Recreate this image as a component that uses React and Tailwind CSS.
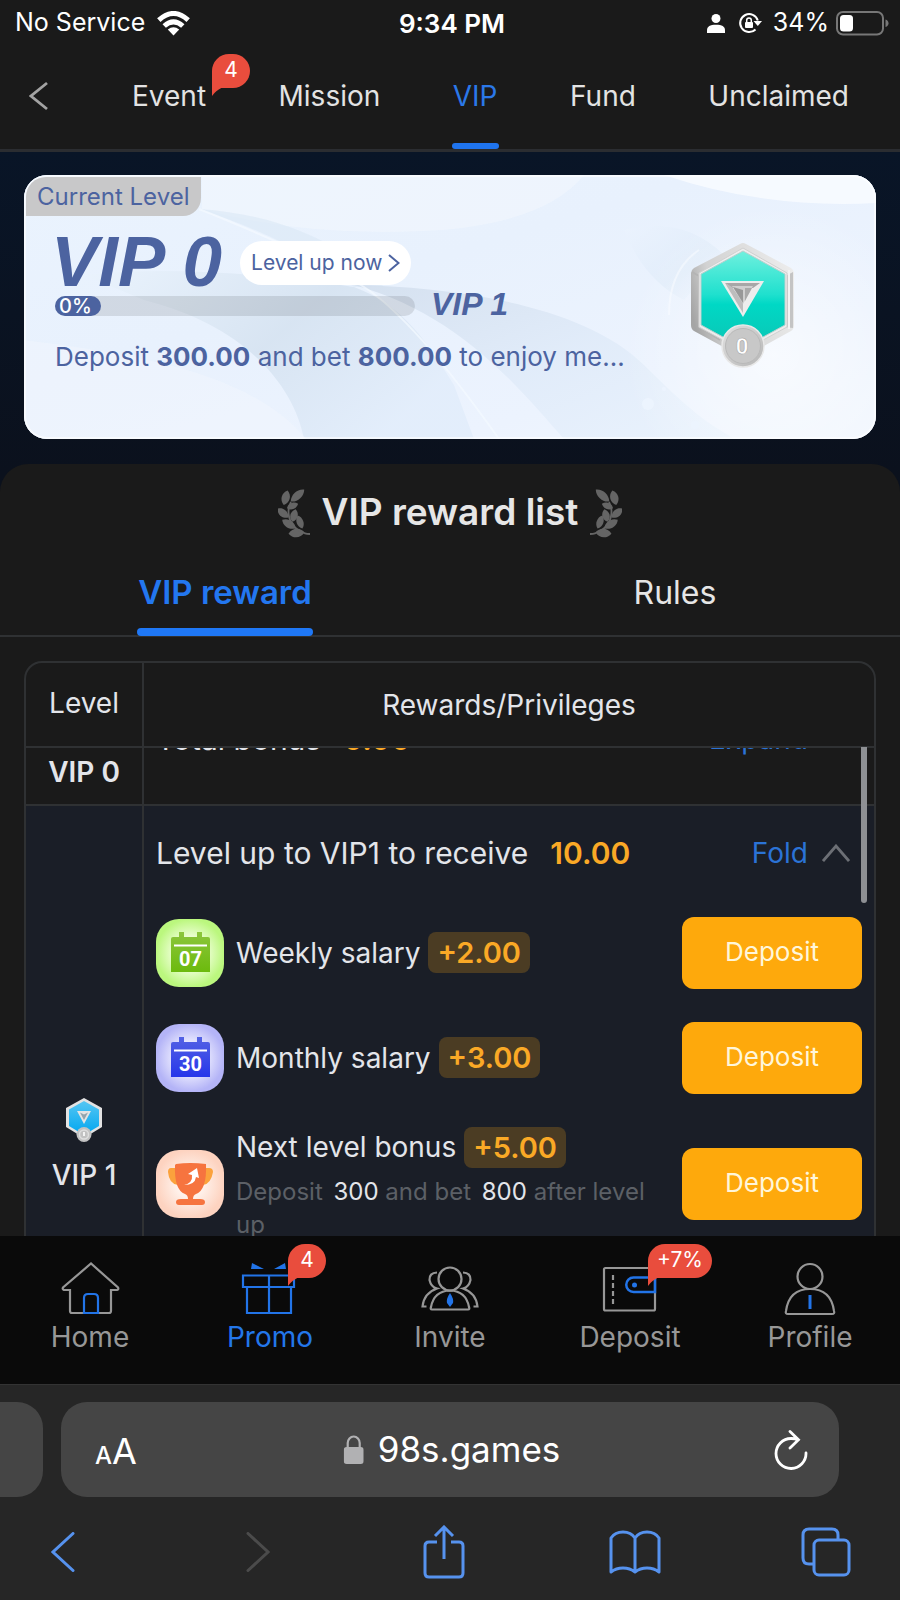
import { useEffect, useRef } from 'react';

const rewards = [
  { icon: 'weekly', title: 'Weekly salary', amount: '+2.00' },
  { icon: 'monthly', title: 'Monthly salary', amount: '+3.00' },
  { icon: 'trophy', title: 'Next level bonus', amount: '+5.00', deposit: 300, bet: 800 },
];

const leaves = [
  [19.5, 6.5, -42, 9, 4],
  [7.7, 8.7, -75, 7.5, 4.2],
  [14.5, 17, -22, 6, 3.2],
  [5, 24, 40, 7, 3.8],
  [16, 26.5, -75, 6.5, 3.8],
  [11, 35, 32, 8, 4],
  [22, 33, 70, 7, 3.5],
  [18.5, 44, -5, 8, 4.4],
];

function Laurel({ className }) {
  return (
    <svg viewBox="0 0 33 50" className={`w-[33px] h-[50px] mt-1 ${className || ''}`} fill="#656565" aria-hidden="true">
      {leaves.map(([x, y, r, w, h]) => (
        <path key={`${x}-${y}`} d="M-1 0C-.5-1.3.5-1.3 1 0C.5 1.3-.5 1.3-1 0Z" transform={`translate(${x} ${y}) rotate(${r}) scale(${w} ${h})`} />
      ))}
      <path d="M13 13C8 22 11 35 19 40S28 45 32 45" fill="none" stroke="#656565" strokeWidth="1.8" />
    </svg>
  );
}

function Bubble({ children, className }) {
  return (
    <span className={`absolute top-2 h-[34px] min-w-[38px] px-[9px] rounded-[17px] rounded-bl-none bg-[#e94d3d] text-white text-[21px] leading-[32px] text-center ${className}`}>
      {children}
      <svg viewBox="0 0 12 8" className="absolute left-0 top-full w-3 h-2" fill="#e94d3d" aria-hidden="true"><path d="M0-1H12Q5 1 0 8Z" /></svg>
    </span>
  );
}

function StatusBar() {
  return (
    <div className="flex-none grid grid-cols-3 items-center h-[46px] pl-[15px] pr-[11px] text-[25px] text-white">
      <div className="flex items-center gap-3">
        No Service
        <svg viewBox="0 0 33 25" className="w-[33px] h-[25px]" fill="none" stroke="#fff" strokeWidth="5" aria-hidden="true">
          <path d="M1.8 9.2Q16.500-4.200 31.200 9.200" />
          <path d="M7.200 15Q16.500 6.600 25.800 15" />
          <path d="M16.500 24.500L10.800 18.600Q16.500 14 22.200 18.600Z" fill="#fff" stroke="none" />
        </svg>
      </div>
      <div className="text-center text-[26px] font-semibold">9:34 PM</div>
      <div className="flex items-center justify-end">
        <svg viewBox="0 0 18 19" className="w-[18px] h-[19px] mr-[13px]" fill="#fff" aria-hidden="true">
          <circle cx="9" cy="4.500" r="4.500" />
          <path d="M0 19V16.500C0 12.500 3 10.800 9 10.800S18 12.500 18 16.500V19Z" />
        </svg>
        <svg viewBox="0 0 24 22" className="w-6 h-[22px] mr-[11px]" fill="none" aria-hidden="true">
          <path d="M17.500 17.500A9 9 0 1 1 19.800 8.500" stroke="#fff" strokeWidth="2" />
          <path d="M15.500 9H24L19.800 14Z" fill="#fff" />
          <rect x="7" y="10" width="8" height="6" rx="1" fill="#fff" />
          <path d="M8.700 10V8.200A2.300 2.300 0 0 1 13.300 8.200V10" stroke="#fff" strokeWidth="1.500" />
        </svg>
        34%
        <svg viewBox="0 0 53 25" className="w-[53px] h-[25px] ml-[7px]" aria-hidden="true">
          <rect x="1" y="1" width="46" height="22.500" rx="6" fill="none" stroke="#777" strokeWidth="2" />
          <rect x="4" y="4" width="13" height="16.500" rx="3.500" fill="#fff" />
          <path d="M49.500 8.500Q52.500 9.500 52.500 12.300T49.500 16Z" fill="#777" />
        </svg>
      </div>
    </div>
  );
}

function TopTabs() {
  return (
    <header className="flex-none relative z-10 flex items-stretch h-[106px] border-b-3 border-[#2b2d31] text-[28px] text-[#e3e3e3]">
      <button aria-label="Back" className="w-[96px] pl-[29px] pb-1">
        <svg viewBox="0 0 20 30" className="w-5 h-[30px]" fill="none" stroke="#a3a3a3" strokeWidth="2.800" aria-hidden="true"><path d="M18 2L2 15L18 28" /></svg>
      </button>
      <nav className="flex-1 flex justify-between pr-[15px]">
        <a href="#event" className="relative flex items-center px-9 pb-1">
          Event
          <Bubble className="left-[116px]">4</Bubble>
        </a>
        <a href="#mission" className="flex items-center px-9 pb-1">Mission</a>
        <a href="#vip" className="relative flex items-center px-9 pb-1 text-[#2b78e8]">
          VIP
          <span className="absolute left-[35px] right-[35px] bottom-0 h-[6px] rounded-sm bg-[#1f74ee]" />
        </a>
        <a href="#fund" className="flex items-center px-9 pb-1">Fund</a>
        <a href="#unclaimed" className="flex items-center px-9 pb-1">Unclaimed</a>
      </nav>
    </header>
  );
}

function Medal() {
  return (
    <svg viewBox="0 0 106 130" className="w-[106px] h-[130px]" role="img" aria-label="VIP 0 medal">
      <defs>
        <linearGradient id="teal" x1="0" y1="0" x2="0" y2="1">
          <stop offset="0" stopColor="#6ff0de" />
          <stop offset=".45" stopColor="#1fe0ce" />
          <stop offset=".55" stopColor="#00d8c5" />
          <stop offset="1" stopColor="#0cc5b4" />
        </linearGradient>
        <linearGradient id="rim" x1="0" y1=".6" x2="1" y2=".3">
          <stop offset="0" stopColor="#a5a5a5" />
          <stop offset=".25" stopColor="#d2d2d2" />
          <stop offset="1" stopColor="#ececec" />
        </linearGradient>
        <linearGradient id="coin" x1="0" y1="0" x2="1" y2="1">
          <stop offset="0" stopColor="#e2e2e2" />
          <stop offset="1" stopColor="#b5b5b5" />
        </linearGradient>
      </defs>
      <path d="M50 3Q53 1 56 3L101 27Q104 29 104 32V84Q104 88 101 90L56 115Q53 117 50 115L4 90Q1 88 1 84V32Q1 29 4 27Z" fill="url(#rim)" />
      <path d="M103 31L94 36V86L103 87Z" fill="#c4c4c4" />
      <path d="M99 29V88" stroke="#f4f4f4" strokeWidth="2" />
      <path d="M2 31L9 35V86L30 99" stroke="#b4b4b4" strokeWidth="2" fill="none" />
      <path d="M53 7L97 32V86L53 110L9 86V32Z" fill="#ededed" stroke="#d0d0d0" />
      <path d="M53 10L95 33V84L53 107L11 84V33Z" fill="url(#teal)" stroke="#b9cfcd" strokeWidth="1" />
      <path d="M31 40H74L53 76Z" fill="#ededed" />
      <path d="M35 42H70L63 47H42Z" fill="#a7a7a7" />
      <path d="M35 42L53 72V61L42 46Z" fill="#bdbdbd" />
      <path d="M42 45H63L53 63Z" fill="#cfcfcf" />
      <path d="M43 46L53 49V62Z" fill="#989898" />
      <path d="M55 47H62L55 60Z" fill="#a9a9a9" />
      <circle cx="53" cy="105" r="21" fill="url(#coin)" stroke="#e8e8e8" strokeWidth="1.500" />
      <circle cx="53" cy="105" r="17.500" fill="#c8c8c8" stroke="#b9b9b9" strokeWidth="1" />
      <text x="52" y="113" textAnchor="middle" fontFamily="Roboto, sans-serif" fontSize="22" fontWeight="700" fill="#fff" stroke="#999" strokeWidth=".5">0</text>
    </svg>
  );
}

function SmallMedal() {
  return (
    <svg viewBox="0 0 38 46" className="w-[38px] h-[46px]" aria-hidden="true">
      <defs>
        <linearGradient id="sky" x1="0" y1="0" x2="0" y2="1">
          <stop offset="0" stopColor="#55c6f3" />
          <stop offset="1" stopColor="#00a6f0" />
        </linearGradient>
      </defs>
      <path d="M19 1L37 11V30L19 41L1 30V11Z" fill="#e2e2e2" />
      <path d="M19 4L34 12.500V29L19 38L4 29V12.500Z" fill="url(#sky)" />
      <path d="M12 14H26L19 27Z" fill="#e4e4e4" />
      <path d="M15 15.500L19 17.500L23 15.500L19 23Z" fill="#93a4ad" />
      <circle cx="19" cy="37.500" r="7.500" fill="#c2c2c2" />
      <circle cx="19" cy="37.500" r="4.500" fill="none" stroke="#dedede" strokeWidth="1.500" />
      <path d="M19 35V39" stroke="#fff" strokeWidth="1.600" />
    </svg>
  );
}

function LevelCard() {
  return (
    <div className="relative h-[264px] rounded-[23px] overflow-hidden bg-[#eaf2fc] text-[#4c63a0]">
      <svg viewBox="0 0 852 264" preserveAspectRatio="none" className="absolute inset-0 w-full h-full" aria-hidden="true">
        <defs>
          <linearGradient id="wash" x1="0" y1="0" x2="1" y2="1">
            <stop offset="0" stopColor="#eaf3fe" />
            <stop offset=".4" stopColor="#e8f1fd" />
            <stop offset=".75" stopColor="#ecf3fe" />
            <stop offset="1" stopColor="#f2f7fe" />
          </linearGradient>
          <linearGradient id="fold" x1="0" y1="0" x2="1" y2=".5">
            <stop offset="0" stopColor="#eaf3fd" />
            <stop offset=".55" stopColor="#d6e3f1" />
            <stop offset="1" stopColor="#e2edfb" />
          </linearGradient>
          <linearGradient id="tail" x1="0" y1="0" x2="1" y2="1">
            <stop offset="0" stopColor="#d3dfee" />
            <stop offset=".5" stopColor="#e0ebf9" />
            <stop offset="1" stopColor="#e9f2fd" />
          </linearGradient>
          <linearGradient id="petal" x1="0" y1="0" x2="1" y2="1">
            <stop offset="0" stopColor="#ebf3fe" />
            <stop offset=".6" stopColor="#dfebf9" />
            <stop offset="1" stopColor="#ecf3fe" />
          </linearGradient>
          <radialGradient id="shine">
            <stop offset="0" stopColor="#fff" />
            <stop offset="1" stopColor="#fff" stopOpacity="0" />
          </radialGradient>
        </defs>
        <rect width="852" height="264" fill="url(#wash)" />
        <path d="M178 0H560Q520 50 400 56T178 34Z" fill="#f1f7fe" opacity=".6" />
        <path d="M60 100C150 90 250 100 330 112C380 130 405 170 430 210L450 264H280C270 210 220 150 120 125Z" fill="url(#fold)" opacity=".9" />
        <path d="M175 34C260 40 320 70 360 112L330 112Q270 65 175 34Z" fill="#dbe7f5" opacity=".6" />
        <path d="M330 110C430 112 560 130 620 190S690 250 710 264H540C500 220 440 140 330 110Z" fill="url(#tail)" opacity=".9" />
        <path d="M0 165C120 180 230 200 282 264H0Z" fill="#f0f5fe" opacity=".6" />
        <path d="M600 55Q660 40 700 80L660 125Q620 105 600 55Z" fill="url(#petal)" opacity=".7" />
        <path d="M640 0Q740 34 852 28V0Z" fill="#f7fbff" opacity=".9" />
        <path d="M175 34Q290 80 340 112T475 264" fill="none" stroke="#f4f9ff" strokeWidth="2" opacity=".7" />
        <path d="M645 140Q645 95 675 75" fill="none" stroke="#f6faff" strokeWidth="2" opacity=".6" />
        <circle cx="750" cy="180" r="150" fill="url(#shine)" opacity=".6" />
        <circle cx="624" cy="229" r="6" fill="#ecf4fe" />
        <circle cx="640" cy="214" r="2" fill="#ecf4fe" />
        <circle cx="671" cy="250" r="4" fill="#ecf4fe" />
      </svg>
      <div className="relative flex h-full items-start justify-between border-2 border-white/60 rounded-[23px] pr-[78px]">
        <div className="min-w-0">
          <div className="w-fit h-[39px] pl-[11px] pr-3 rounded-br-[18px] rounded-tl-[20px] bg-[#c8c8c9] text-2xl leading-[40px]">Current Level</div>
          <div className="pl-[29px]">
            <div className="flex items-center gap-[18px] h-16 mt-[14px]">
              <h1 className="-ml-1 font-['Liberation_Sans',sans-serif] font-bold italic text-[71px] leading-16">VIP 0</h1>
              <button className="flex items-center gap-[6px] h-[44px] px-[11px] mt-[2px] rounded-full bg-white text-[21px]">
                Level up now
                <svg viewBox="0 0 12 18" className="w-3 h-[18px]" fill="none" stroke="#4c63a0" strokeWidth="2" aria-hidden="true"><path d="M1 1L10.500 9L1 17" /></svg>
              </button>
            </div>
            <div className="flex items-center gap-4 h-5 mt-[2px]">
              <div role="progressbar" aria-label="VIP progress" aria-valuenow={0} className="w-[360px] h-5 rounded-full bg-black/10">
                <div className="w-[46px] h-5 rounded-full bg-[#4c63a0] text-white text-[20px] leading-5 font-medium pl-1">0%</div>
              </div>
              <span className="pb-1 font-['Liberation_Sans',sans-serif] font-bold italic text-[32px] leading-5">VIP 1</span>
            </div>
            <p className="mt-[25px] text-[26px] leading-8 whitespace-nowrap">
              Deposit <b>300.00</b> and bet <b>800.00</b> to enjoy me...
            </p>
          </div>
        </div>
        <div className="flex-none pt-[64px]">
          <Medal />
        </div>
      </div>
    </div>
  );
}

function RewardIcon({ type }) {
  if (type === 'trophy') {
    return (
      <svg viewBox="0 0 68 68" className="flex-none w-[68px] h-[68px]" aria-hidden="true">
        <defs>
          <radialGradient id="peach"><stop offset=".4" stopColor="#fff1ea" /><stop offset="1" stopColor="#fdd3c0" /></radialGradient>
        </defs>
        <rect width="68" height="68" rx="23" fill="url(#peach)" />
        <path d="M20 18H15Q12 18 12 22Q13 34 22 35M49 18H53Q57 18 57 22Q55 34 47 35" fill="#fba23c" />
        <path d="M20 14Q34 12 50 14Q51 40 40 44Q37 45 37 49H44Q49 49 49 52T46 55H23Q20 55 20 52T25 49H32Q32 45 29 44Q18 40 19 15Z" fill="#f6743f" />
        <path d="M28 35Q37 33 36 25L32 24L41 18L43 28L40 27Q39 35 28 35Z" fill="#fff" />
      </svg>
    );
  }
  const weekly = type === 'weekly';
  return (
    <svg viewBox="0 0 68 68" className="flex-none w-[68px] h-[68px]" aria-hidden="true">
      <defs>
        <radialGradient id={`${type}-box`}>
          <stop offset=".4" stopColor={weekly ? '#f3ffdf' : '#eeeeff'} />
          <stop offset="1" stopColor={weekly ? '#bbf77e' : '#b4b4f7'} />
        </radialGradient>
        <linearGradient id={`${type}-page`} x1="0" y1="0" x2="0" y2="1">
          <stop offset="0" stopColor={weekly ? '#8cc63c' : '#5462e4'} />
          <stop offset="1" stopColor={weekly ? '#6cba0d' : '#2636ea'} />
        </linearGradient>
      </defs>
      <rect width="68" height="68" rx="23" fill={`url(#${type}-box)`} />
      <path d="M15 20Q15 18 17 18H23V13H28V18H41V13H46V18H52Q54 18 54 20V53H15Z" fill={`url(#${type}-page)`} />
      <path d="M18 26.500H51" stroke="#fff" strokeWidth="2.200" />
      <text x="34.500" y="47" textAnchor="middle" fontFamily="Roboto, sans-serif" fontWeight="700" fontSize="20" fill="#fff">{weekly ? '07' : '30'}</text>
    </svg>
  );
}

function RewardRow({ item }) {
  return (
    <div className="flex items-center gap-3 min-h-[105px] py-4">
      <RewardIcon type={item.icon} />
      <div className="flex-1 min-w-0">
        <div className="flex items-center gap-2 text-[28px]">
          {item.title}
          <span className="h-[41px] px-[9px] rounded-lg bg-[#4b3c23] text-[#faa926] text-[29px] font-semibold leading-[41px]">{item.amount}</span>
        </div>
        {item.deposit && (
          <p className="mt-[7px] text-2xl leading-[33px] text-[#5c6066]">
            Deposit <span className="text-[#e3e5ea] ml-1">{item.deposit}</span> and bet <span className="text-[#e3e5ea] ml-1">{item.bet}</span> after level up
          </p>
        )}
      </div>
      <button className="flex-none w-[180px] h-[72px] pb-[2px] rounded-xl bg-[#fea90c] text-[#fff6da] text-[26px]">Deposit</button>
    </div>
  );
}

function RewardTable() {
  const body = useRef(null);

  useEffect(() => {
    body.current.scrollTop = 70;
  }, []);

  return (
    <div className="relative flex-1 min-h-0 mx-6 mt-6 border-2 border-b-0 border-[#2f3133] rounded-t-[18px] overflow-hidden">
      <table className="flex flex-col h-full text-[28px] text-[#e3e5ea]">
        <thead className="block flex-none">
          <tr className="grid grid-cols-[118px_1fr] h-[85px] border-b-2 border-[#2f3133]">
            <th className="flex items-center justify-center font-normal border-r-2 border-[#2f3133] pb-[3px]">Level</th>
            <th className="flex items-center justify-center font-normal">Rewards/Privileges</th>
          </tr>
        </thead>
        <tbody ref={body} className="block flex-1 min-h-0 overflow-y-auto [scrollbar-width:none]">
          <tr className="grid grid-cols-[118px_1fr] h-[128px] border-b-2 border-[#2f3133]">
            <td className="flex flex-col items-center justify-center gap-[15px] border-r-2 border-[#2f3133] font-semibold">
              <SmallMedal />
              <span className="leading-[34px]">VIP 0</span>
            </td>
            <td className="flex items-center pl-3 pr-[66px] pb-1 text-[30px]">
              Total bonus
              <b className="ml-[22px] font-semibold text-[#faa926]">0.00</b>
              <button className="ml-auto text-[28px] text-[#2b73d6]">Expand</button>
            </td>
          </tr>
          <tr className="grid grid-cols-[118px_1fr] h-[676px] bg-[#1a1e27]">
            <td className="flex flex-col items-center justify-center gap-[15px] border-r-2 border-[#2f3133] font-medium">
              <SmallMedal />
              <span className="leading-[34px]">VIP 1</span>
            </td>
            <td className="px-3">
              <div className="flex items-center h-[94px] text-[30px]">
                Level up to VIP1 to receive
                <b className="ml-[22px] font-semibold text-[#faa926]">10.00</b>
                <button className="flex items-center gap-[14px] ml-auto pr-3 text-[28px] text-[#2b73d6]">
                  Fold
                  <svg viewBox="0 0 28 18" className="w-7 h-[18px]" fill="none" stroke="#6c6f75" strokeWidth="2.800" aria-hidden="true"><path d="M1 17L14 2L27 17" /></svg>
                </button>
              </div>
              {rewards.map((item) => (
                <RewardRow key={item.title} item={item} />
              ))}
            </td>
          </tr>
        </tbody>
      </table>
      <div className="absolute right-[7px] top-[84px] w-[6px] h-[156px] rounded-b-full bg-[#8e9094]" />
    </div>
  );
}

const line = { fill: 'none', stroke: '#979797', strokeWidth: 2.2 };
const blue = { fill: 'none', stroke: '#2274e8', strokeWidth: 2.2 };

function NavItem({ label, active, bubble, children }) {
  return (
    <a href={`#${label.toLowerCase()}`} className={`relative flex-1 flex flex-col items-center pt-[25px] text-[28px] ${active ? 'text-[#2377ea]' : 'text-[#979797]'}`}>
      <svg viewBox="0 0 60 56" className="w-[60px] h-[56px]" aria-hidden="true">{children}</svg>
      <span className="leading-[34px] mt-[3px]">{label}</span>
      {bubble && <Bubble className="left-[108px]">{bubble}</Bubble>}
    </a>
  );
}

function BottomNav() {
  return (
    <nav className="flex-none relative z-10 flex h-[148px] bg-[#0a0a0a]">
      <NavItem label="Home">
        <path d="M10 29H4Q2 28 3 26.500L31 2.500L58 26.500Q59 28.500 57 29H51V50Q51 52 49 52H12Q10 52 10 50Z" {...line} />
        <path d="M24 52V37Q24 33 28 33H34Q38 33 38 37V52Z" {...blue} />
      </NavItem>
      <NavItem label="Promo" active bubble="4">
        <path d="M3 14.500H54V26H3ZM7 26H51V52H7ZM29 14V52" {...blue} />
        <path d="M12 2L24 8H11ZM45 2L34 8H46Z" fill="#2274e8" />
      </NavItem>
      <NavItem label="Invite">
        <circle cx="30" cy="18" r="11.500" {...line} />
        <path d="M12 48.500H48Q50 48.500 49 46Q46 30 30 29.500Q14 30 11 46Q10 48.500 12 48.500Z" {...line} />
        <path d="M17 11.500Q9 12 9.500 19Q11 26 17 27.500Q4 32 2.500 45.500H6.500M43 11.500Q51 12 50.500 19Q49 26 43 27.500Q56 32 57.500 45.500H53.500" {...line} />
        <path d="M30 32Q34 38 33 42L30 46L27 42Q26 38 30 32Z" fill="#2274e8" />
      </NavItem>
      <NavItem label="Deposit" bubble="+7%">
        <rect x="4" y="7" width="51" height="42.500" rx="1.500" {...line} />
        <path d="M13 14V43" {...line} strokeDasharray="5 3" />
        <path d="M55 16.500H33.500A7.200 7.200 0 0 0 33.500 31H55Z" {...blue} strokeWidth="2.500" />
        <circle cx="34.500" cy="24" r="2.500" fill="#2274e8" />
      </NavItem>
      <NavItem label="Profile">
        <circle cx="30" cy="15.500" r="12.500" {...line} />
        <path d="M8 53Q5 53 6 50Q9 28 30 28Q51 28 54 50Q55 53 52 53Z" {...line} />
        <path d="M30 34V48" {...blue} strokeWidth="3" />
      </NavItem>
    </nav>
  );
}

function SafariBar() {
  return (
    <footer className="flex-none border-t border-[#333] bg-[#262626] text-white">
      <div className="flex gap-[18px] h-[95px] mt-[17px]">
        <div className="w-[43px] rounded-r-[26px] bg-[#454545]" />
        <div className="relative flex-1 flex items-center justify-between mr-[61px] pl-[34px] pr-[31px] rounded-[26px] bg-[#454545]">
          <button aria-label="Page settings" className="flex items-baseline pt-[5px] leading-9"><span className="text-2xl font-medium">A</span><span className="text-[36px]">A</span></button>
          <div className="absolute left-1/2 -translate-x-1/2 flex items-center gap-[14px] pl-1 text-[35px]">
            <svg viewBox="0 0 20 29" className="w-5 h-[29px]" aria-hidden="true">
              <rect y="12" width="20" height="17" rx="3" fill="#b1b1b3" />
              <path d="M4 13V8A6 6.500 0 0 1 16 8V13" fill="none" stroke="#b1b1b3" strokeWidth="2.200" />
            </svg>
            98s.games
          </div>
          <button aria-label="Reload">
            <svg viewBox="0 0 34 40" className="w-[34px] h-10" fill="none" stroke="#fff" strokeWidth="2.800" strokeLinecap="round" aria-hidden="true">
              <path d="M32 23A15 15 0 1 1 17 8.500Q21 8.500 24.500 9.800M16 1.500L24.500 9.800L16 18" />
            </svg>
          </button>
        </div>
      </div>
      <div className="flex items-center justify-between h-[103px] pl-[38px] pr-[49px] pt-[6px] text-[#5692ee]">
        <button aria-label="Back" className="flex justify-center w-[50px]">
          <svg viewBox="0 0 24 40" className="w-6 h-10" fill="none" stroke="currentColor" strokeWidth="3" strokeLinecap="round"><path d="M22 1.500L2 20L22 38.500" /></svg>
        </button>
        <button aria-label="Forward" className="flex justify-end w-[50px] pr-2 text-[#4b4b4b]">
          <svg viewBox="0 0 24 40" className="w-6 h-10" fill="none" stroke="currentColor" strokeWidth="3" strokeLinecap="round"><path d="M2 1.500L22 20L2 38.500" /></svg>
        </button>
        <button aria-label="Share" className="flex justify-center w-[50px]">
          <svg viewBox="0 0 42 54" className="w-[42px] h-[54px]" fill="none" stroke="currentColor" strokeWidth="3"><path d="M14 17H6Q2 17 2 21V48Q2 52 6 52H36Q40 52 40 48V21Q40 17 36 17H28M21 34V2M12 11L21 2L30 11" /></svg>
        </button>
        <button aria-label="Bookmarks" className="flex justify-center w-[52px]">
          <svg viewBox="0 0 52 44" className="w-[52px] h-11" fill="none" stroke="currentColor" strokeWidth="3" strokeLinejoin="round"><path d="M26 8Q22 2 14 2T2 8V42Q7 38 14 38T26 42Q31 38 38 38T50 42V8Q46 2 38 2T26 8ZM26 8V42" /></svg>
        </button>
        <button aria-label="Tabs" className="flex justify-center w-[50px]">
          <svg viewBox="0 0 50 50" className="w-[50px] h-[50px]" fill="none" stroke="currentColor" strokeWidth="3"><path d="M13 37H8Q2 37 2 31V8Q2 2 8 2H31Q37 2 37 8V12" /><rect x="13" y="13" width="35" height="35" rx="5" /></svg>
        </button>
      </div>
    </footer>
  );
}

export default function App() {
  return (
    <div className="flex flex-col h-screen min-h-[1200px] overflow-hidden bg-[#1a1a1a] font-['Inter',sans-serif]">
      <StatusBar />
      <TopTabs />
      <main className="flex-1 min-h-0 flex flex-col bg-[linear-gradient(180deg,#091527_0px,#0b111d_320px)]">
        <section className="flex-none px-6 pt-[23px] pb-[25px]">
          <LevelCard />
        </section>
        <section className="flex-1 min-h-0 flex flex-col rounded-t-[28px] bg-[#1a1a1a]">
          <h2 className="flex-none flex items-center justify-center gap-[11px] h-[95px] text-[37px] font-semibold text-[#e6e6e6]">
            <Laurel />
            VIP reward list
            <Laurel className="-scale-x-100" />
          </h2>
          <div className="flex-none flex h-[78px] border-b-2 border-[#2f3133] text-[32px]">
            <div className="flex-1 flex justify-center">
              <button className="relative pb-2 text-[33px] font-semibold text-[#2377f0]">
                VIP reward
                <span className="absolute -inset-x-[1px] -bottom-[1px] h-2 rounded-[4px] bg-[#1f78f6]" />
              </button>
            </div>
            <div className="flex-1 flex justify-center">
              <button className="pb-2 text-[#e6e6e6]">Rules</button>
            </div>
          </div>
          <RewardTable />
        </section>
      </main>
      <BottomNav />
      <SafariBar />
    </div>
  );
}
